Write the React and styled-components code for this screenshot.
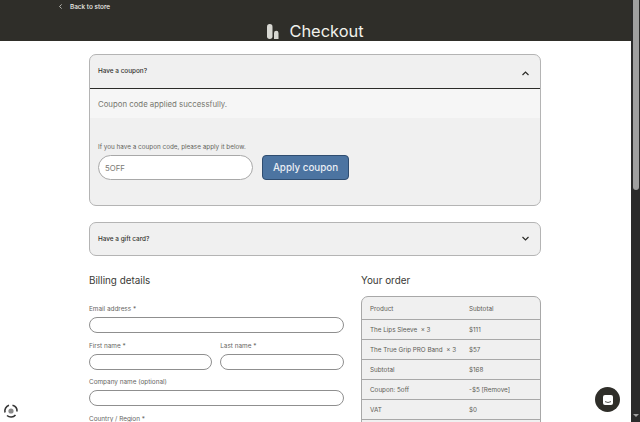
import React from "react";
import styled, { createGlobalStyle } from "styled-components";

const GlobalStyle = createGlobalStyle`
  html, body { margin: 0; padding: 0; height: 100%; background: #fff; overflow: hidden; }
  * { box-sizing: border-box; }
  body { font-family: "Inter", "Liberation Sans", sans-serif; color: #3a3a36; }
`;

const Shell = styled.div`
  position: relative;
  display: flex;
  width: 640px;
  height: 422px;
  overflow: hidden;
`;

const Page = styled.div`
  flex: 1;
  min-width: 0;
  overflow: hidden;
`;

const Scrollbar = styled.div`
  width: 9px;
  background: #2b2b2b;
  display: flex;
  flex-direction: column;
  justify-content: space-between;
  align-items: center;
  padding: 0 1px 5px;
`;

const Thumb = styled.div`
  width: 6px;
  height: 190px;
  background: #a0a0a0;
  border-radius: 0 0 3px 3px;
`;

const ArrowDown = styled.div`
  width: 0;
  height: 0;
  border-left: 3px solid transparent;
  border-right: 3px solid transparent;
  border-top: 3px solid #a0a0a0;
`;

const Header = styled.header`
  height: 41px;
  background: #2f2e29;
  padding: 0 59px;
  overflow: hidden;
`;

const BackLink = styled.a`
  display: flex;
  align-items: center;
  gap: 8px;
  height: 13px;
  color: #f0f0ea;
  font-size: 6.4px;
  font-weight: 500;
`;

const TitleRow = styled.div`
  display: flex;
  justify-content: center;
  align-items: center;
  gap: 10px;
  height: 28px;
  padding-top: 8px;
`;

const Title = styled.h1`
  margin: 0;
  color: #f2f2ec;
  font-size: 16.4px;
  font-weight: 400;
  line-height: 20px;
`;

const Main = styled.main`
  width: 452px;
  margin-left: 89px;
  padding-top: 13px;
`;

const Card = styled.section`
  background: #f0f0f0;
  border: 1px solid #b4b4b4;
  border-radius: 7px;
  margin-bottom: 16px;
  overflow: hidden;
`;

const CardHead = styled.div`
  height: ${(p) => (p.$open ? "34px" : "32px")};
  display: flex;
  align-items: center;
  justify-content: space-between;
  padding: 0 11px 0 8px;
  border-bottom: ${(p) => (p.$open ? "1.5px solid #2b2b28" : "0")};
`;

const HeadLabel = styled.span`
  font-size: 6.4px;
  font-weight: 500;
  color: #33332f;
  margin-bottom: ${(p) => (p.$open ? "2px" : "0")};
`;

const ChevronIcon = styled.svg`
  margin-top: ${(p) => (p.$up ? "3px" : "-1px")};
`;

const Notice = styled.div`
  height: 29px;
  background: #f6f6f6;
  display: flex;
  align-items: center;
  padding-left: 8px;
  font-size: 7.8px;
  color: #77776f;
`;

const CouponBody = styled.div`
  height: 87px;
  padding: 25px 8px 0;
`;

const SmallLabel = styled.label`
  display: block;
  font-size: 6.35px;
  line-height: 8px;
  color: #66665f;
`;

const CouponRow = styled.div`
  display: flex;
  gap: 9px;
  margin-top: 4px;
`;

const CouponInput = styled.div`
  width: 155px;
  height: 25px;
  background: #fff;
  border: 1px solid #a8a8a8;
  border-radius: 13px;
  display: flex;
  align-items: center;
  padding-left: 6px;
  font-size: 7.8px;
  color: #7b7b75;
`;

const ApplyButton = styled.button`
  width: 87px;
  height: 25px;
  background: #4c74a1;
  color: #e9eef4;
  border: 1px solid #2f4d70;
  border-radius: 4px;
  font-family: inherit;
  font-size: 9.8px;
  font-weight: 500;
  padding: 0;
`;

const Columns = styled.div`
  display: grid;
  grid-template-columns: 254.5px 180px;
  gap: 17.5px;
  margin-top: 17px;
`;

const SectionTitle = styled.h2`
  margin: 0;
  font-size: 9.9px;
  line-height: 14px;
  font-weight: 400;
  color: #3a3a36;
`;

const Form = styled.div`
  display: flex;
  flex-direction: column;
  gap: 8.5px;
  margin-top: 18px;
`;

const FieldRow = styled.div`
  display: grid;
  grid-template-columns: 1fr 1fr;
  gap: 8px;
`;

const Field = styled.div`
  display: flex;
  flex-direction: column;
  gap: 4px;
`;

const FieldLabel = styled.label`
  font-size: 6.4px;
  line-height: 8px;
  color: #66665f;
`;

const TextInput = styled.input`
  width: 100%;
  height: 16px;
  background: #fff;
  border: 1px solid #8f8f8f;
  border-radius: 8px;
  padding: 0 6px;
`;

const OrderTable = styled.div`
  margin-top: 9px;
  background: #f0f0f0;
  border: 1px solid #a8a8a8;
  border-radius: 7px;
  overflow: hidden;
`;

const OrderRow = styled.div`
  display: grid;
  grid-template-columns: 99px 1fr;
  align-items: center;
  height: ${(p) => (p.$head ? "23px" : "20px")};
  padding: ${(p) => (p.$head ? "2px 0 0 8px" : "0 0 0 8px")};
  font-size: 6.3px;
  color: #5c5c56;
  border-bottom: 1px solid #a8a8a8;
`;

const ItemName = styled.span`
  white-space: pre;
`;

const ChatBubble = styled.div`
  position: absolute;
  left: 595px;
  top: 387px;
  width: 25px;
  height: 25px;
  border-radius: 50%;
  background: #2f2e29;
  display: flex;
  align-items: center;
  justify-content: center;
`;

const Badge = styled.div`
  position: absolute;
  left: 3px;
  top: 403px;
  width: 16px;
  height: 16px;
`;

const ORDER = [
  ["The Lips Sleeve  × 3", "$111"],
  ["The True Grip PRO Band  × 3", "$57"],
  ["Subtotal", "$168"],
  ["Coupon: 5off", "-$5 [Remove]"],
  ["VAT", "$0"],
  ["", ""],
];

const Chevron = ({ up }) => (
  <ChevronIcon $up={up} width="7" height="5" viewBox="0 0 7 5" fill="none">
    <path
      d={up ? "M0.5 4L3.5 1L6.5 4" : "M0.5 1L3.5 4L6.5 1"}
      stroke="#2b2b28"
      strokeWidth="1.2"
    />
  </ChevronIcon>
);

const App = () => (
  <Shell>
    <GlobalStyle />
    <Page>
      <Header>
        <BackLink>
          <svg width="3" height="5" viewBox="0 0 3 5" fill="none">
            <path d="M2.6 0.4L0.6 2.5L2.6 4.6" stroke="#f0f0ea" strokeWidth="0.7" />
          </svg>
          Back to store
        </BackLink>
        <TitleRow>
          <svg width="12" height="15" viewBox="0 0 12 15">
            <rect x="0" y="0" width="5.5" height="15" rx="2.7" fill="#d8d8d2" />
            <path d="M7 15V9a2.2 2.2 0 0 1 4.5 0v6z" fill="#d8d8d2" />
          </svg>
          <Title>Checkout</Title>
        </TitleRow>
      </Header>
      <Main>
        <Card>
          <CardHead $open>
            <HeadLabel $open>Have a coupon?</HeadLabel>
            <Chevron up />
          </CardHead>
          <Notice>Coupon code applied successfully.</Notice>
          <CouponBody>
            <SmallLabel>If you have a coupon code, please apply it below.</SmallLabel>
            <CouponRow>
              <CouponInput>5OFF</CouponInput>
              <ApplyButton>Apply coupon</ApplyButton>
            </CouponRow>
          </CouponBody>
        </Card>
        <Card>
          <CardHead>
            <HeadLabel>Have a gift card?</HeadLabel>
            <Chevron />
          </CardHead>
        </Card>
        <Columns>
          <div>
            <SectionTitle>Billing details</SectionTitle>
            <Form>
              <Field>
                <FieldLabel>Email address *</FieldLabel>
                <TextInput />
              </Field>
              <FieldRow>
                <Field>
                  <FieldLabel>First name *</FieldLabel>
                  <TextInput />
                </Field>
                <Field>
                  <FieldLabel>Last name *</FieldLabel>
                  <TextInput />
                </Field>
              </FieldRow>
              <Field>
                <FieldLabel>Company name (optional)</FieldLabel>
                <TextInput />
              </Field>
              <Field>
                <FieldLabel>Country / Region *</FieldLabel>
              </Field>
            </Form>
          </div>
          <div>
            <SectionTitle>Your order</SectionTitle>
            <OrderTable>
              <OrderRow $head>
                <span>Product</span>
                <span>Subtotal</span>
              </OrderRow>
              {ORDER.map(([name, price], i) => (
                <OrderRow key={i}>
                  <ItemName>{name}</ItemName>
                  <span>{price}</span>
                </OrderRow>
              ))}
            </OrderTable>
          </div>
        </Columns>
      </Main>
    </Page>
    <Scrollbar>
      <Thumb />
      <ArrowDown />
    </Scrollbar>
    <Badge>
      <svg width="16" height="16" viewBox="0 0 16 16" fill="none">
        <circle cx="8" cy="8" r="2.6" fill="#8a8a8a" />
        <path d="M2 9.5A6 6 0 0 1 6 2.3" stroke="#333" strokeWidth="1.6" />
        <path d="M9.5 2.2A6 6 0 0 1 14 8.5" stroke="#333" strokeWidth="1.6" />
        <path d="M12.5 12A6 6 0 0 1 4 12.5" stroke="#333" strokeWidth="1.6" />
      </svg>
    </Badge>
    <ChatBubble>
      <svg width="12" height="12" viewBox="0 0 12 12">
        <rect x="1" y="1" width="10" height="10" rx="2" fill="#fff" />
        <path d="M3 7.6Q6 9.4 9 7.6" stroke="#2f2e29" strokeWidth="0.8" fill="none" />
      </svg>
    </ChatBubble>
  </Shell>
);

export default App;
